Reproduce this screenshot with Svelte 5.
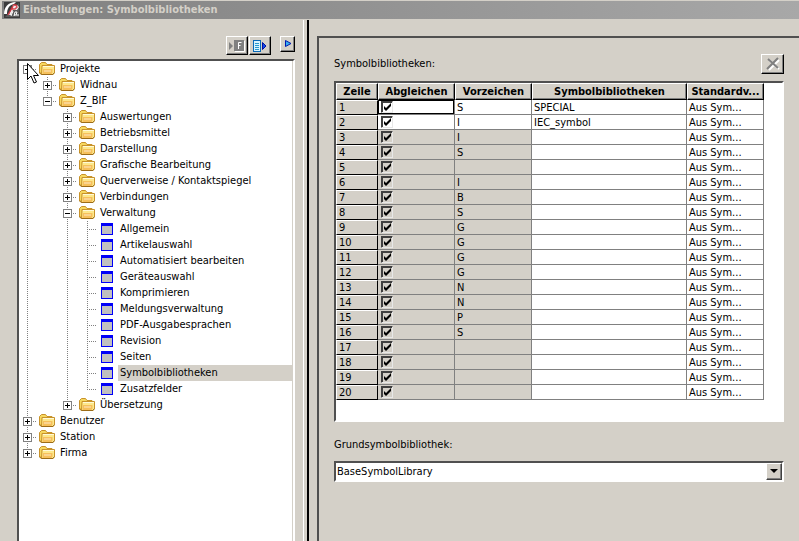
<script lang="ts">
  type Node = {
    label: string;
    leaf?: boolean;
    children?: Node[];
  };

  const leaf = (label: string): Node => ({ label, leaf: true });

  const nodes: Node[] = [
    {
      label: 'Projekte',
      children: [
        { label: 'Widnau' },
        {
          label: 'Z_BIF',
          children: [
            { label: 'Auswertungen' },
            { label: 'Betriebsmittel' },
            { label: 'Darstellung' },
            { label: 'Grafische Bearbeitung' },
            { label: 'Querverweise / Kontaktspiegel' },
            { label: 'Verbindungen' },
            {
              label: 'Verwaltung',
              children: [
                leaf('Allgemein'),
                leaf('Artikelauswahl'),
                leaf('Automatisiert bearbeiten'),
                leaf('Geräteauswahl'),
                leaf('Komprimieren'),
                leaf('Meldungsverwaltung'),
                leaf('PDF-Ausgabesprachen'),
                leaf('Revision'),
                leaf('Seiten'),
                leaf('Symbolbibliotheken'),
                leaf('Zusatzfelder'),
              ],
            },
            { label: 'Übersetzung' },
          ],
        },
      ],
    },
    { label: 'Benutzer' },
    { label: 'Station' },
    { label: 'Firma' },
  ];

  let selected = $state('Symbolbibliotheken');

  const prefixes = ['S', 'I', 'I', 'S', '', 'I', 'B', 'S', 'G', 'G', 'G', 'G', 'N', 'N', 'P', 'S', '', '', '', ''];
  const libraries = ['SPECIAL', 'IEC_symbol'];

  let rows = $state(
    prefixes.map((prefix, i) => ({
      sync: true,
      prefix,
      library: libraries[i] ?? '',
      // rows without a library are locked
      locked: i >= libraries.length,
    }))
  );
</script>

{#snippet folder()}
  <svg class="icon" width="16" height="16" viewBox="0 0 16 16">
    <path d="M.5 12V3.5l2-2h4l1.500 2h5v9z" fill="#f6d860" stroke="#c8922a" />
    <path d="M3 4.500h12.500v7l-1.500 2H2.500z" fill="#fde88c" stroke="#c8922a" />
    <path d="M4 5.500h11" stroke="#fffad8" />
    <path d="M4 8h9.500v3.500L12.500 13H3.500z" fill="#f6c05c" />
    <path d="M5 9h7v2H5z" fill="#fad490" />
    <path d="M.5 12l2 1.500H14l1.500-2" fill="none" stroke="#9c6c18" />
  </svg>
{/snippet}

{#snippet branch(items: Node[])}
  <ul>
    {#each items as item}
      <li>
        <div class="node">
          <span class="joint">
            {#if !item.leaf}
              <button class="expander" class:open={item.children} aria-label={item.label}></button>
            {/if}
          </span>
          {#if item.leaf}
            <svg class="icon" width="16" height="16" viewBox="0 0 16 16">
              <rect x="2" y="2" width="12" height="12" fill="#0000f8" />
              <rect x="3" y="5" width="10" height="8" fill="#c0c0c0" />
            </svg>
          {:else}
            {@render folder()}
          {/if}
          <button
            class="label"
            class:selected={item.label === selected}
            onclick={() => (selected = item.label)}>{item.label}</button>
        </div>
        {#if item.children}
          {@render branch(item.children)}
        {/if}
      </li>
    {/each}
  </ul>
{/snippet}

<div class="window">
  <header>
    <svg width="16" height="16" viewBox="0 0 16 16">
      <rect width="16" height="16" fill="#3c3c3c" />
      <path d="M0 12C0 5 4 0 12 0L10 2C5 3 3 7 3 12z" fill="#fff" />
      <path d="M5 13 9 3h4l2 2-2 3H9l-2 5z" fill="#f2eaea" />
      <path d="M4 13 9 4M9 3h3l1 2-2 2H8" fill="none" stroke="#d0303c" stroke-width="1.500" />
      <path d="M7 14l2-5M10 14l1-4h2l-1 3M10 13h5" fill="none" stroke="#fff" />
      <path d="M1 15 15 1v14z" fill="#fff" opacity=".15" />
    </svg>
    <h1>Einstellungen: Symbolbibliotheken</h1>
  </header>

  <main>
    <aside>
      <div class="toolbar">
        <button class="tool" aria-label="Filter" disabled>
          <svg width="18" height="14" viewBox="0 0 18 14">
            <path d="M1 3v8l4-4z" fill="#808080" />
            <rect x="6" y="1" width="10" height="11" fill="#808080" />
            <path d="M10.5 10V3.5h3M10.5 6.5h2" fill="none" stroke="#fff" />
            <path d="M16.5 2v10.5H7" fill="none" stroke="#fff" />
          </svg>
        </button>
        <button class="tool" aria-label="Liste">
          <svg width="18" height="14" viewBox="0 0 18 14">
            <rect x="2.5" y="1.5" width="7" height="11" fill="#d8f4ff" stroke="#0868b8" />
            <path d="M4 4.5h4M4 6.5h4M4 8.5h4M4 10.5h4" stroke="#2898d0" />
            <path d="M11.5 3.5v7L15 7z" fill="#1048e8" stroke="#0010a0" />
          </svg>
        </button>
        <button class="tool small" aria-label="Menü">
          <svg width="12" height="12" viewBox="0 0 12 12">
            <path d="M3.500 2.500v6L9 5.500z" fill="#38b0f0" stroke="#0018b0" />
          </svg>
        </button>
      </div>
      <nav class="tree" aria-label="Einstellungen">
        {@render branch(nodes)}
        <svg class="pointer" width="13" height="21" viewBox="0 0 13 21">
          <path
            d="M.5.5v16l3.5-3.5 3 7 2.500-1-3-6.500h5z"
            fill="#fff"
            stroke="#000"
          />
        </svg>
      </nav>
    </aside>

    <div class="splitter"></div>

    <section>
      <div class="caption">
        <span id="grid-title">Symbolbibliotheken:</span>
        <button class="tool delete" aria-label="Löschen" disabled>
          <svg width="16" height="14" viewBox="0 0 16 14">
            <path d="M4 3l10 9M14 3 4 13" stroke="#fff" stroke-width="2" />
            <path d="M3 2l10 9M13 1 2 12" stroke="#808080" stroke-width="2" />
          </svg>
        </button>
      </div>

      <div class="grid">
        <table aria-labelledby="grid-title">
          <colgroup>
            <col class="c-row" /><col class="c-mid" /><col class="c-mid" /><col class="c-lib" /><col class="c-mid" />
          </colgroup>
          <thead>
            <tr>
              <th>Zeile</th>
              <th>Abgleichen</th>
              <th>Vorzeichen</th>
              <th>Symbolbibliotheken</th>
              <th>Standardv...</th>
            </tr>
          </thead>
          <tbody>
            {#each rows as row, i}
              <tr class:locked={row.locked}>
                <th scope="row">{i + 1}</th>
                <td class="check" class:focus={i === 0}>
                  <input type="checkbox" aria-label="Abgleichen {i + 1}" bind:checked={row.sync} />
                </td>
                <td class="prefix">{row.prefix}</td>
                <td>{row.library}</td>
                <td>Aus Sym...</td>
              </tr>
            {/each}
          </tbody>
        </table>
      </div>

      <label for="base">Grundsymbolbibliothek:</label>
      <div class="combo">
        <select id="base">
          <option>BaseSymbolLibrary</option>
        </select>
        <span class="drop"></span>
      </div>
    </section>
  </main>
</div>

<style>
  :global(body) {
    margin: 0;
    background: #d4d0c8;
  }

  .window {
    display: flex;
    flex-direction: column;
    box-sizing: border-box;
    min-height: 100vh;
    padding: 1px 0 0 2px;
    background: #d4d0c8;
    color: #000;
    font: 11px/14px 'DejaVu Sans Condensed', 'DejaVu Sans', sans-serif;
  }

  button,
  select,
  input {
    margin: 0;
    padding: 0;
    border: 0;
    border-radius: 0;
    background: none;
    color: inherit;
    font: inherit;
    appearance: none;
  }

  svg {
    display: block;
  }

  header {
    display: flex;
    align-items: center;
    gap: 3px;
    height: 18px;
    padding-left: 2px;
    background: linear-gradient(90deg, #808080, #a8a8a8);
  }

  h1 {
    margin: 0;
    color: #d4d0c8;
    font-size: 11px;
    font-weight: bold;
  }

  main {
    display: flex;
    flex: 1;
    padding-top: 1px;
  }

  aside {
    display: flex;
    flex-direction: column;
    flex: none;
    width: 301px;
  }

  .toolbar {
    display: flex;
    justify-content: flex-end;
    gap: 1px;
    height: 23px;
    padding: 16px 8px 0 0;
  }

  .tool {
    display: flex;
    align-items: center;
    justify-content: center;
    box-sizing: border-box;
    width: 22px;
    height: 19px;
    border: 1px solid;
    border-color: #fff #000 #000 #fff;
    box-shadow: inset -1px -1px #808080;
  }

  .small {
    width: 15px;
    height: 16px;
    margin-left: 8px;
  }

  .delete {
    width: 23px;
    height: 20px;
  }

  .tree {
    position: relative;
    flex: 1;
    margin: 0 8px 0 15px;
    border: 2px solid;
    border-color: #505050 #fff #fff #505050;
    border-bottom: 0;
    background: #fff;
    box-shadow: inset -1px 0 #d4d0c8;
  }

  ul {
    margin: 0;
    padding: 0;
    list-style: none;
  }

  ul ul {
    margin-left: 20px;
  }

  /* dotted connector down the siblings, cut off at the last one */
  li {
    background: repeating-linear-gradient(#808080 0 1px, transparent 1px 2px) 8px 0 / 1px 100% no-repeat;
  }

  li:last-child {
    background-size: 1px 8px;
  }

  .tree > ul > li:first-child {
    background-position: 8px 8px;
  }

  .node {
    display: flex;
    align-items: center;
    height: 16px;
  }

  .joint {
    display: flex;
    align-items: center;
    width: 20px;
    height: 16px;
    background: repeating-linear-gradient(90deg, #808080 0 1px, transparent 1px 2px) 8px 8px / 10px 1px no-repeat;
  }

  .expander {
    width: 9px;
    height: 9px;
    margin: 1px 0 0 4px;
    border: 1px solid #808080;
    background:
      linear-gradient(#000, #000) 1px 3px / 5px 1px no-repeat,
      linear-gradient(#000, #000) 3px 1px / 1px 5px no-repeat,
      #fff;
  }

  .expander.open {
    background:
      linear-gradient(#000, #000) 1px 3px / 5px 1px no-repeat,
      #fff;
  }

  .icon {
    flex: none;
  }

  .label {
    flex: 1;
    height: 16px;
    margin-left: 3px;
    padding-left: 2px;
    text-align: left;
    white-space: nowrap;
  }

  .selected {
    background: #d4d0c8;
  }

  .pointer {
    position: absolute;
    top: 2px;
    left: 8px;
  }

  .splitter {
    flex: none;
    width: 3px;
    margin-right: 8px;
    border: solid;
    border-color: #fff #000 #fff #fff;
    border-width: 0 2px 0 1px;
  }

  section {
    display: flex;
    flex: 1;
    flex-direction: column;
    margin-top: 16px;
    padding: 16px 15px 0;
    border: solid #505050;
    border-width: 2px 0 0 2px;
  }

  .caption {
    display: flex;
    align-items: center;
    justify-content: space-between;
    margin-bottom: 7px;
  }

  .grid {
    box-sizing: border-box;
    min-height: 341px;
    border: 2px solid;
    border-color: #505050 #fff #fff #505050;
    background: #fff;
  }

  table {
    width: 428px;
    border-spacing: 0;
    table-layout: fixed;
  }

  .c-row {
    width: 42px;
  }

  .c-mid {
    width: 77px;
  }

  .c-lib {
    width: 155px;
  }

  th,
  td {
    box-sizing: border-box;
    height: 15px;
    padding: 0 0 0 2px;
    border: solid #808080;
    border-width: 0 1px 1px 0;
    line-height: 13px;
    text-align: left;
    white-space: nowrap;
    overflow: hidden;
  }

  th {
    border-width: 1px;
    border-color: #fff #000 #000 #fff;
    background: #d4d0c8;
    font-weight: normal;
  }

  thead th {
    height: 17px;
    padding: 0;
    font-weight: bold;
    text-align: center;
    box-shadow: inset -1px -1px #808080;
  }

  .check {
    padding-left: 3px;
  }

  .focus {
    box-shadow: inset 0 0 0 1px #000;
  }

  .locked .check,
  .locked .prefix {
    background: #d4d0c8;
  }

  input {
    display: block;
    box-sizing: border-box;
    width: 12px;
    height: 12px;
    border: 1px solid;
    border-color: #404040 #e8e8e8 #e8e8e8 #404040;
    box-shadow: inset 1px 1px #404040;
  }

  input:checked {
    background: url("data:image/svg+xml,%3Csvg xmlns='http://www.w3.org/2000/svg' viewBox='0 0 10 10'%3E%3Cpath d='M2 4v3l2 2 5-5V1L4 6z'/%3E%3C/svg%3E") 0 0 / 10px 10px no-repeat;
  }

  label {
    margin: 16px 0 9px;
  }

  .combo {
    position: relative;
    box-sizing: border-box;
    height: 21px;
    border: 2px solid;
    border-color: #505050 #fff #fff #505050;
    background: #fff;
  }

  select {
    display: block;
    width: 100%;
    height: 17px;
    padding-left: 1px;
  }

  .drop {
    position: absolute;
    top: 0;
    right: 0;
    box-sizing: border-box;
    width: 16px;
    height: 17px;
    border: 1px solid;
    border-color: #fff #404040 #404040 #fff;
    background: #d4d0c8;
    box-shadow: inset -1px -1px #808080;
    pointer-events: none;
  }

  .drop::after {
    content: '';
    display: block;
    width: 0;
    margin: 5px 0 0 3px;
    border: 4px solid transparent;
    border-top-color: #000;
    border-bottom: 0;
  }
</style>
